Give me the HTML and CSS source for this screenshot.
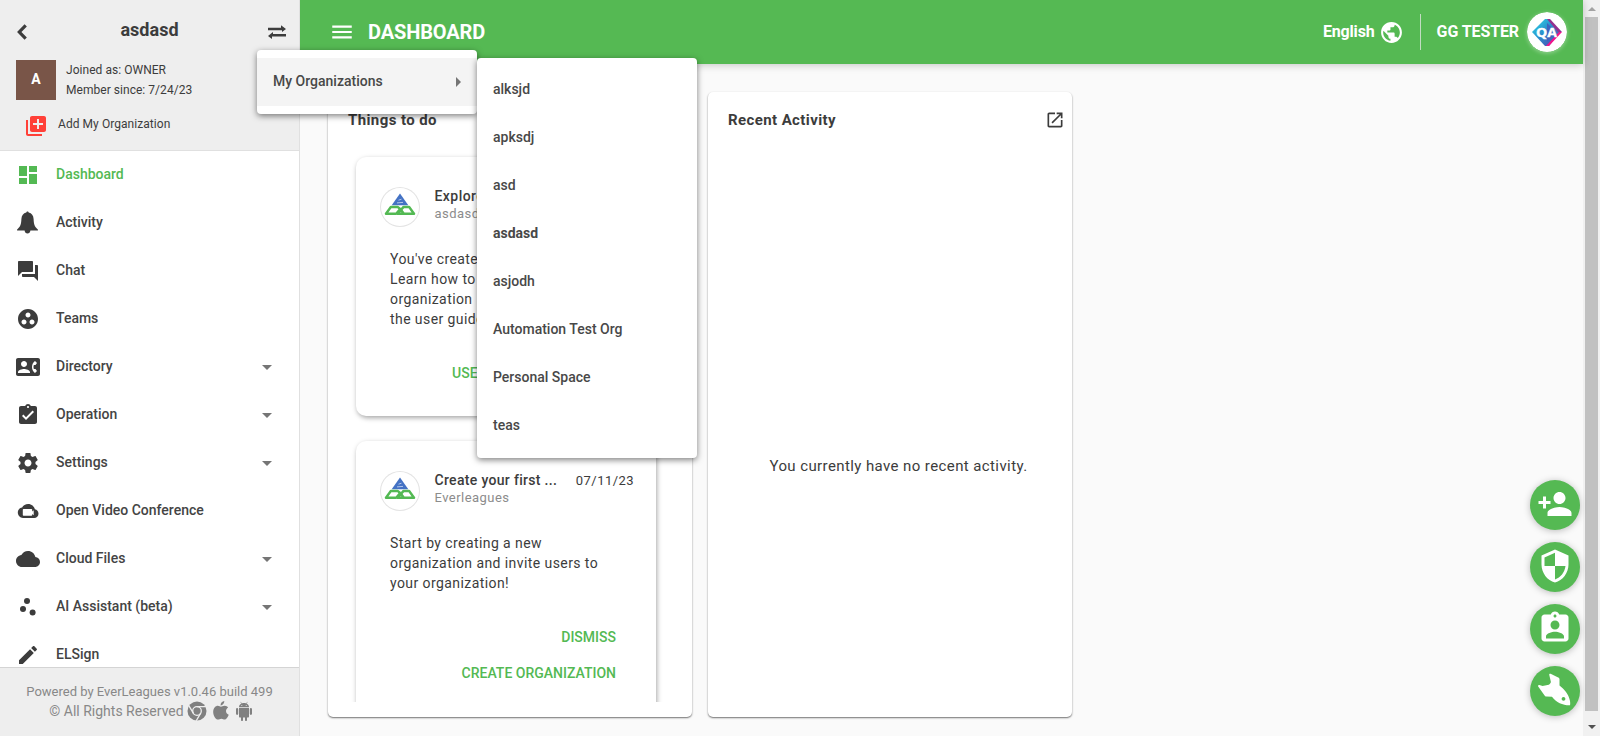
FILE: index.html
```html
<!DOCTYPE html>
<html lang="en">
<head>
<meta charset="utf-8">
<title>Dashboard</title>
<link rel="stylesheet" href="styles.css">
</head>
<body>
<svg class="defs" aria-hidden="true">
  <symbol id="dashboard" viewBox="0 0 24 24"><path d="M3 13h8V3H3v10zm0 8h8v-6H3v6zm10 0h8V11h-8v10zm0-18v6h8V3h-8z"/></symbol>
  <symbol id="bell" viewBox="0 0 24 24"><path d="M11.500.4c.7 0 1.100.5 1.200 1.200 3 .7 4.700 3 4.900 6.500.2 5 .8 7.800 4.200 10.300.4.400.2 1.100-.4 1.100h-7c-.2 1.800-1.300 3-2.900 3s-2.700-1.200-2.900-3h-7c-.6 0-.8-.7-.4-1.100 3.400-2.500 4-5.300 4.200-10.300.2-3.500 1.900-5.800 4.900-6.500.1-.7.500-1.200 1.200-1.200z"/></symbol>
  <symbol id="forum" viewBox="0 0 24 24"><path d="M21 6h-2v9H6v2c0 .55.45 1 1 1h11l4 4V7c0-.55-.45-1-1-1zm-4 6V3c0-.55-.45-1-1-1H3c-.55 0-1 .45-1 1v14l4-4h10c.55 0 1-.45 1-1z"/></symbol>
  <symbol id="teams" viewBox="0 0 24 24"><path d="M12 2C6.480 2 2 6.480 2 12s4.480 10 10 10 10-4.480 10-10S17.520 2 12 2zM8 17.500c-1.380 0-2.500-1.120-2.500-2.500s1.120-2.500 2.500-2.500 2.500 1.120 2.500 2.500-1.120 2.500-2.500 2.500zM9.500 8c0-1.380 1.120-2.500 2.500-2.500s2.500 1.120 2.500 2.500-1.120 2.500-2.500 2.500S9.500 9.380 9.500 8zm6.500 9.500c-1.380 0-2.500-1.120-2.500-2.500s1.120-2.500 2.500-2.500 2.500 1.120 2.500 2.500-1.120 2.500-2.500 2.500z"/></symbol>
  <symbol id="contact" viewBox="0 0 24 24"><path d="M22 3H2C.9 3 0 3.900 0 5v14c0 1.100.9 2 2 2h20c1.100 0 1.990-.9 1.990-2L24 5c0-1.100-.9-2-2-2zM8 6c1.660 0 3 1.340 3 3s-1.340 3-3 3-3-1.340-3-3 1.340-3 3-3zm6 12H2v-1c0-2 4-3.100 6-3.100s6 1.100 6 3.100v1zm3.850-4h1.640L21 16l-1.990 1.990c-1.310-.98-2.280-2.380-2.730-3.990-.18-.64-.28-1.310-.28-2s.1-1.360.28-2c.45-1.620 1.420-3.010 2.730-3.990L21 8l-1.510 2h-1.640c-.22.63-.35 1.300-.35 2s.13 1.370.35 2z"/></symbol>
  <symbol id="task" viewBox="0 0 24 24"><path d="M19 3h-4.180C14.400 1.840 13.300 1 12 1c-1.300 0-2.400.84-2.820 2H5c-1.100 0-2 .9-2 2v14c0 1.100.9 2 2 2h14c1.100 0 2-.9 2-2V5c0-1.100-.9-2-2-2zm-7 0c.55 0 1 .45 1 1s-.45 1-1 1-1-.45-1-1 .45-1 1-1zm-2 14l-4-4 1.410-1.410L10 14.170l6.590-6.590L18 9l-8 8z"/></symbol>
  <symbol id="gear" viewBox="0 0 24 24"><path d="M19.430 12.980c.04-.32.07-.64.07-.98s-.03-.66-.07-.98l2.110-1.650c.19-.15.24-.42.12-.64l-2-3.460c-.12-.22-.39-.3-.61-.22l-2.490 1c-.52-.4-1.080-.73-1.690-.98l-.38-2.650C14.460 2.180 14.250 2 14 2h-4c-.25 0-.46.18-.49.42l-.38 2.650c-.61.25-1.170.59-1.690.98l-2.490-1c-.23-.09-.49 0-.61.22l-2 3.460c-.13.22-.07.49.12.64l2.110 1.650c-.04.32-.07.65-.07.98s.03.66.07.98l-2.110 1.650c-.19.15-.24.42-.12.64l2 3.460c.12.22.39.3.61.22l2.490-1c.52.4 1.080.73 1.690.98l.38 2.650c.03.24.24.42.49.42h4c.25 0 .46-.18.49-.42l.38-2.650c.61-.25 1.170-.59 1.690-.98l2.490 1c.23.09.49 0 .61-.22l2-3.460c.12-.22.07-.49-.12-.64l-2.110-1.650zM12 15.500c-1.930 0-3.500-1.570-3.500-3.500s1.570-3.500 3.500-3.500 3.500 1.570 3.500 3.500-1.570 3.500-3.500 3.500z"/></symbol>
  <symbol id="cloudvideo" viewBox="0 0 24 24"><path fill-rule="evenodd" d="M18.900 10.300C18.300 7.500 15.500 5 12.200 5 9.500 5 7.200 6.300 6.100 8.600 3.600 8.900 1.800 11 1.800 13.600c0 2.900 2.300 5.400 5.200 5.400h11.200c2.400 0 4.300-1.900 4.300-4.300 0-2.400-1.500-4.200-3.600-4.400zM7.500 10h8c.4 0 .7.300.7.700v1.800l1.500-1.300v5.100l-1.500-1.300v1c0 .4-.3.700-.7.700h-8c-.4 0-.7-.3-.7-.7v-5.300c0-.4.300-.7.700-.7z"/></symbol>
  <symbol id="cloud" viewBox="0 0 24 24"><path d="M19.350 10.040C18.670 6.590 15.640 4 12 4 9.110 4 6.600 5.640 5.350 8.040 2.340 8.360 0 10.910 0 14c0 3.310 2.690 6 6 6h13c2.760 0 5-2.240 5-5 0-2.640-2.050-4.780-4.650-4.960z"/></symbol>
  <symbol id="dots" viewBox="0 0 24 24"><circle cx="7" cy="14" r="3"/><circle cx="11" cy="6" r="3"/><circle cx="16.600" cy="17.600" r="3"/></symbol>
  <symbol id="pencil" viewBox="0 0 24 24"><path d="M3 17.250V21h3.750L17.810 9.940l-3.750-3.750L3 17.250zM20.710 7.040c.39-.39.39-1.020 0-1.410l-2.340-2.340c-.39-.39-1.020-.39-1.410 0l-1.830 1.830 3.750 3.750 1.830-1.830z"/></symbol>
  <symbol id="add" viewBox="0 0 24 24"><path d="M4 6H2v14c0 1.100.9 2 2 2h14v-2H4V6zm16-4H8c-1.100 0-2 .9-2 2v12c0 1.100.9 2 2 2h12c1.100 0 2-.9 2-2V4c0-1.100-.9-2-2-2zm-1 9h-4v4h-2v-4H9V9h4V5h2v4h4v2z"/></symbol>
  <symbol id="globe" viewBox="0 0 24 24"><path d="M12 2C6.480 2 2 6.480 2 12s4.480 10 10 10 10-4.480 10-10S17.520 2 12 2zm-1 17.930c-3.950-.49-7-3.850-7-7.930 0-.62.08-1.210.21-1.790L9 15v1c0 1.100.9 2 2 2v1.930zm6.900-2.540c-.26-.81-1-1.390-1.900-1.390h-1v-3c0-.55-.45-1-1-1H8v-2h2c.55 0 1-.45 1-1V7h2c1.100 0 2-.9 2-2v-.41c2.930 1.190 5 4.060 5 7.410 0 2.080-.8 3.970-2.100 5.390z"/></symbol>
  <symbol id="open" viewBox="0 0 24 24"><path d="M19 19H5V5h7V3H5c-1.110 0-2 .9-2 2v14c0 1.100.89 2 2 2h14c1.100 0 2-.9 2-2v-7h-2v7zM14 3v2h3.590l-9.830 9.830 1.410 1.410L19 6.410V10h2V3h-7z"/></symbol>
  <symbol id="personadd" viewBox="0 0 24 24"><path d="M15 12c2.210 0 4-1.790 4-4s-1.790-4-4-4-4 1.790-4 4 1.790 4 4 4zm-9-2V7H4v3H1v2h3v3h2v-3h3v-2H6zm9 4c-2.670 0-8 1.340-8 4v2h16v-2c0-2.660-5.330-4-8-4z"/></symbol>
  <symbol id="shield" viewBox="0 0 24 24"><path d="M12 1L3 5v6c0 5.550 3.840 10.740 9 12 5.160-1.260 9-6.450 9-12V5l-9-4zm0 10.990h7c-.53 4.120-3.280 7.790-7 8.940V12H5V6.300l7-3.110v8.800z"/></symbol>
  <symbol id="badge" viewBox="0 0 24 24"><path d="M19 3h-4.180C14.400 1.840 13.300 1 12 1c-1.300 0-2.400.84-2.820 2H5c-1.100 0-2 .9-2 2v14c0 1.100.9 2 2 2h14c1.100 0 2-.9 2-2V5c0-1.100-.9-2-2-2zm-7 0c.55 0 1 .45 1 1s-.45 1-1 1-1-.45-1-1 .45-1 1-1zm0 4c1.660 0 3 1.340 3 3s-1.340 3-3 3-3-1.340-3-3 1.340-3 3-3zm6 12H6v-1.400c0-2 4-3.100 6-3.100s6 1.100 6 3.100V19z"/></symbol>
  <symbol id="rocket" viewBox="0 0 36 36"><path fill-rule="evenodd" d="M12.300 3.100c-.4-1 .4-1.700 1.300-1.300l7.600 3.600c.9.400 1.300 1.100 1.300 2v6c4.700 3.500 9.200 8.700 10.400 15.200.3 1.800.5 3.300.1 4.700-6.500.3-13.700-2.800-18-8.600l-5.500-.2c-1 0-1.600-.4-2.100-1.300L1.200 14.600c-.5-1 .1-1.800 1.200-1.600l3.200.9 6.200-1.100c1-.8 1.900-1.500 2.100-2.800zM26.500 25a1.900 1.900 0 1 0 .01 0z"/></symbol>
  <symbol id="menu" viewBox="0 0 24 24"><path d="M3 18h18v-2H3v2zm0-5h18v-2H3v2zm0-7v2h18V6H3z"/></symbol>
  <symbol id="logo" viewBox="0 0 40 40">
    <path fill="#4472c4" d="M20 6.500l8.300 11.700H11.700z"/><path fill="none" d="M18.500 13.200l3-1M17 15.900l6-.5" stroke="#fff" stroke-width=".6"/>
    <path fill="none" stroke="#53b953" stroke-width="2.500" stroke-linejoin="round" d="M10.900 19.900h6.700l2.600 2.100-4 4.800H6zM29.100 19.900h-5.500l-6 6.900H34zM20.400 22l3.400 4.700"/>
  </symbol>
</svg>

<aside class="sidebar">
  <header class="org">
    <div class="org-top">
      <svg class="back" viewBox="0 0 10 16"><path d="M8.700 1.400L2.300 8l6.400 6.600"/></svg>
      <h2>asdasd</h2>
      <svg class="swap" viewBox="0 0 18 14"><path d="M0 2.800h13V.2L18 4l-4 3V5.200H0zM18 9H5V7l-5 4 4 3v-2.600h14z"/></svg>
    </div>
    <div class="member"><div class="avatar">A</div><div>Joined as: OWNER<br>Member since: 7/24/23</div></div>
    <div class="add-org"><svg><use href="#add"/></svg><span>Add My Organization</span></div>
  </header>
  <nav class="nav">
    <a class="active"><svg><use href="#dashboard"/></svg>Dashboard</a>
    <a><svg><use href="#bell"/></svg>Activity</a>
    <a><svg><use href="#forum"/></svg>Chat</a>
    <a><svg><use href="#teams"/></svg>Teams</a>
    <a class="more"><svg><use href="#contact"/></svg>Directory</a>
    <a class="more"><svg><use href="#task"/></svg>Operation</a>
    <a class="more"><svg><use href="#gear"/></svg>Settings</a>
    <a><svg><use href="#cloudvideo"/></svg>Open Video Conference</a>
    <a class="more"><svg><use href="#cloud"/></svg>Cloud Files</a>
    <a class="more"><svg><use href="#dots"/></svg>AI Assistant (beta)</a>
    <a><svg><use href="#pencil"/></svg>ELSign</a>
  </nav>
  <footer class="foot">
    <div>Powered by EverLeagues v1.0.46 build 499</div>
    <div class="rights"><span>© All Rights Reserved</span>
      <svg class="chrome" viewBox="0 0 20 20"><circle cx="10" cy="10" r="9.500"/><g fill="none" stroke="#eee" stroke-width="1.300"><circle cx="10" cy="10" r="4.300"/><path d="M10 5.700h9M6.300 12.200L1.800 4.600M13.700 12.200l-4.500 7.600"/></g></svg>
      <svg class="apple" viewBox="0 0 16 20"><path d="M11.300 0c.2 2.300-1.600 4.500-3.700 4.400C7.400 2.200 9.200.2 11.300 0zM8 5.700c.8 0 2-1.100 3.900-1 1.300.1 2.500.7 3.200 1.700-3.100 2-2.600 6 .6 7.300-.6 1.700-2.200 4.900-4 4.900-1.300 0-1.700-.8-3.300-.8s-2.100.8-3.300.8C2.600 18.700-.1 14.200.2 10.400.5 6.900 2.700 4.800 4.800 4.800c1.400 0 2.400.9 3.200.9z"/></svg>
      <svg class="android" viewBox="0 0 16 20"><path d="M3 7h10v8.500c0 .6-.4 1-1 1h-1v2.600a1 1 0 0 1-2 0v-2.600H7v2.600a1 1 0 0 1-2 0v-2.600H4c-.6 0-1-.4-1-1zM0 8.200a1.100 1.100 0 0 1 2.200 0v4.600a1.100 1.100 0 0 1-2.200 0zM13.800 8.200a1.100 1.100 0 0 1 2.200 0v4.600a1.100 1.100 0 0 1-2.200 0zM3 6.300c0-1.700.9-3 2.300-3.700L4.400 1l.4-.3 1 1.700c1.400-.5 3-.5 4.400 0l1-1.700.4.300-.9 1.600C12.100 3.300 13 4.600 13 6.300z"/><circle fill="#eee" cx="5.800" cy="4.400" r=".5"/><circle fill="#eee" cx="10.200" cy="4.400" r=".5"/></svg>
    </div>
  </footer>
</aside>

<div class="page">
  <header class="topbar">
    <svg class="burger"><use href="#menu"/></svg>
    <h1>DASHBOARD</h1>
    <span class="lang">English</span><svg class="globe"><use href="#globe"/></svg>
    <i class="divider"></i>
    <span class="user">GG TESTER</span>
    <svg class="user-pic" viewBox="0 0 40 40">
      <defs><linearGradient id="qa" x1="0" y1="0" x2="1" y2="1"><stop offset="0" stop-color="#2fe0ea"/><stop offset=".45" stop-color="#2a8fcb"/><stop offset="1" stop-color="#5a3fae"/></linearGradient></defs>
      <circle cx="20" cy="20" r="20" fill="#fff"/>
      <path fill="url(#qa)" d="M18 7h4l11 13-11 14h-4L5 20z"/>
      <path fill="#93308f" d="M20 7h3l12 13h-4z"/><path fill="#f0148c" d="M35 20L22 34h-3l13-14z"/><path fill="#3f62bd" d="M20 11l9 9-9 10z"/>
      <text x="9" y="24.600" textLength="21" lengthAdjust="spacingAndGlyphs" class="qa">QA</text>
    </svg>
  </header>
  <main class="content">
    <section class="panel">
      <div class="panel-head">Things to do</div>
      <div class="cards">
        <article class="card first">
          <div class="card-head"><svg class="logo"><use href="#logo"/></svg><div class="who"><b>Explore</b><span>asdasd</span></div></div>
          <p>You've created<br>Learn how to<br>organization<br>the user guide</p>
          <div class="actions guide"><a>USER</a></div>
        </article>
        <article class="card">
          <div class="card-head"><svg class="logo"><use href="#logo"/></svg><div class="who"><b>Create your first ...</b><span>Everleagues</span></div><time>07/11/23</time></div>
          <p>Start by creating a new<br>organization and invite users to<br>your organization!</p>
          <div class="actions"><a>DISMISS</a><a>CREATE ORGANIZATION</a></div>
        </article>
      </div>
    </section>
    <section class="panel">
      <div class="panel-head">Recent Activity<svg><use href="#open"/></svg></div>
      <div class="empty">You currently have no recent activity.</div>
    </section>
  </main>
</div>
<div class="scrollbar"><i class="up"></i><i class="thumb"></i><i class="down"></i></div>

<div class="menu menu-root"><div class="item">My Organizations<i></i></div></div>
<div class="menu menu-sub">
  <div class="item">alksjd</div><div class="item">apksdj</div><div class="item">asd</div><div class="item current">asdasd</div>
  <div class="item">asjodh</div><div class="item">Automation Test Org</div><div class="item">Personal Space</div><div class="item">teas</div>
</div>
<div class="fabs">
  <a><svg><use href="#personadd"/></svg></a><a><svg><use href="#shield"/></svg></a><a><svg><use href="#badge"/></svg></a><a><svg><use href="#rocket"/></svg></a>
</div>
</body>
</html>
```
FILE: styles.css
```css
* { box-sizing: border-box; }
body { margin: 0; height: 736px; display: flex; overflow: hidden; position: relative; background: #fafafa; color: #3c3c3c; font-family: Roboto, sans-serif; font-size: 14px; }
h1, h2, p { margin: 0; }
svg { display: block; flex: none; }
.defs { position: absolute; width: 0; height: 0; }

.sidebar { width: 300px; height: 736px; display: flex; flex-direction: column; background: #fff; border-right: 1px solid #e0e0e0; position: relative; z-index: 2; }
.org { height: 151px; flex: none; background: #eee; border-bottom: 1px solid #e0e0e0; }
.org-top { height: 60px; padding: 0 13px 0 17px; display: flex; align-items: center; justify-content: space-between; }
.org-top h2 { font-size: 18px; font-weight: 700; line-height: 60px; margin-left: 4px; }
.back { width: 10px; height: 16px; margin-top: 3px; fill: none; stroke: #3c3c3c; stroke-width: 3.2; }
.swap { width: 18px; height: 14px; margin-top: 3px; fill: #3c3c3c; }
.member { display: flex; gap: 10px; padding-left: 16px; font-size: 12px; line-height: 20px; letter-spacing: .04px; }
.avatar { width: 40px; height: 40px; background: #795548; color: #fff; font-weight: 700; font-size: 14px; line-height: 39px; text-align: center; letter-spacing: 0; }
.add-org { display: flex; align-items: center; gap: 10px; padding: 14px 0 0 24px; font-size: 12px; letter-spacing: .06px; }
.add-org svg { width: 24px; height: 24px; fill: #ff4038; }
.add-org span { margin-top: -4px; }
.nav { height: 516px; flex: none; overflow: hidden; }
.nav a { display: flex; align-items: center; height: 48px; padding: 0 27px 2px 16px; font-weight: 500; line-height: 46px; color: #444; }
.nav svg { width: 24px; height: 24px; margin: 2px 16px 0 0; fill: #3c3c3c; }
.nav .active { color: #53b953; }
.nav .active svg { fill: #53b953; }
.more::after { content: ""; margin: 2px 0 0 auto; border: 5px solid transparent; border-top-color: #757575; border-bottom: 0; }
.foot { height: 69px; background: #eee; border-top: 1px solid #d4d4d4; padding-top: 14px; text-align: center; font-size: 13px; line-height: 20px; color: #888; }
.rights { display: flex; justify-content: center; align-items: center; font-size: 14px; padding-left: 2px; margin-top: -1px; }
.rights svg { fill: #808080; }
.chrome { width: 20px; height: 20px; margin-left: 3px; }
.apple { width: 16px; height: 20px; margin-left: 6px; }
.android { width: 16px; height: 20px; margin-left: 7px; }

.page { width: 1283px; height: 736px; }
.topbar { height: 64px; background: #55b953; color: #fff; display: flex; align-items: center; padding: 0 16px 0 29px; position: relative; box-shadow: 0 1px 8px rgba(0,0,0,.22); }
.topbar svg { fill: #fff; }
.burger { width: 26px; height: 26px; }
.topbar h1 { font-size: 20px; font-weight: 700; letter-spacing: -.12px; margin: 0 auto 0 13px; }
.lang, .user { font-size: 16px; font-weight: 700; letter-spacing: -.1px; margin-top: -1px; }
.lang { letter-spacing: -.15px; }
.globe { width: 25px; height: 25px; margin: 1px 16px 0 4px; }
.divider { width: 1px; height: 36px; background: #c2dcc2; margin-right: 16px; }
.user-pic { width: 40px; height: 40px; margin-left: 8px; border-radius: 50%; box-shadow: 0 1px 4px rgba(255,255,255,.4); }
.qa { font: 700 13px "Open Sans", sans-serif; fill: #fff; stroke: #fff; stroke-width: .4; }
.content { padding: 28px; display: flex; gap: 16px; }
.panel { width: 364px; height: 625px; background: #fff; border-radius: 5px; box-shadow: 0 1px 2px rgba(0,0,0,.45), 0 1px 1px rgba(0,0,0,.15); }
.panel-head { height: 56px; padding: 0 7px 0 20px; font-size: 15px; font-weight: 700; letter-spacing: .4px; display: flex; align-items: center; justify-content: space-between; }
.panel-head svg { width: 20px; height: 20px; fill: #3c3c3c; }
.cards { height: 554px; margin: 0 20px; padding: 9px 8px 0; overflow: hidden; }
.card { width: 300px; height: 285px; padding: 30px 24px 0; border-radius: 10px; box-shadow: 1px 2px 5px rgba(0,0,0,.35); }
.card.first { height: 259px; margin-bottom: 25px; }
.card-head { display: flex; height: 40px; gap: 14.5px; }
.logo { width: 40px; height: 40px; border-radius: 50%; box-shadow: inset 0 0 0 1px #e4e4e4; }
.who { white-space: nowrap; }
.who b { display: block; font-size: 14px; font-weight: 500; line-height: 19px; letter-spacing: .32px; }
.first .who b { letter-spacing: .45px; }
.who span { display: block; font-size: 13px; line-height: 16px; letter-spacing: .45px; color: #8c8c8c; }
.card time { margin-left: auto; margin-right: -2px; font-size: 13px; line-height: 19px; letter-spacing: .45px; }
.card p { margin: 22px 0 0 10px; font-size: 14px; line-height: 20px; letter-spacing: .42px; white-space: nowrap; }
.actions { display: flex; flex-direction: column; align-items: flex-end; margin: 26px 16px 0 0; }
.actions.guide { align-items: flex-start; margin: 26px 0 0 72px; }
.actions a { line-height: 36px; font-weight: 500; color: #53b953; }
.empty { height: 569px; padding-top: 308px; text-align: center; font-size: 15px; line-height: 20px; letter-spacing: .4px; margin-left: 17px; }

.scrollbar { width: 17px; height: 736px; background: #f1f1f1; display: flex; flex-direction: column; align-items: center; }
.scrollbar .up { margin: 7px 0 6px; border: 4px solid transparent; border-top: 0; border-bottom-color: #a3a3a3; }
.scrollbar .thumb { width: 13px; height: 694px; background: #c1c1c1; }
.scrollbar .down { margin-top: 14px; border: 4px solid transparent; border-bottom: 0; border-top-color: #505050; }

.menu { position: absolute; z-index: 5; width: 220px; padding: 8px 0; background: #fff; border-radius: 4px; box-shadow: 0 2px 6px rgba(0,0,0,.5); }
.menu-root { left: 257px; top: 50px; }
.menu-sub { left: 477px; top: 58px; z-index: 6; }
.item { height: 48px; padding: 0 16px 2px; line-height: 46px; font-weight: 500; color: #484848; display: flex; align-items: center; justify-content: space-between; }
.item i { border: 5px solid transparent; border-right: 0; border-left-color: #757575; margin-top: 2px; }
.menu-root .item { background: #f4f4f4; }
.menu .current { font-weight: 700; }
.fabs { position: absolute; left: 1530px; top: 480px; display: grid; gap: 12px; }
.fabs a { width: 50px; height: 50px; border-radius: 50%; background: #55b953; box-shadow: 0 1px 7px rgba(0,0,0,.25); padding: 5.500px 7px; }
.fabs svg { width: 36px; height: 36px; fill: #fff; }
```
